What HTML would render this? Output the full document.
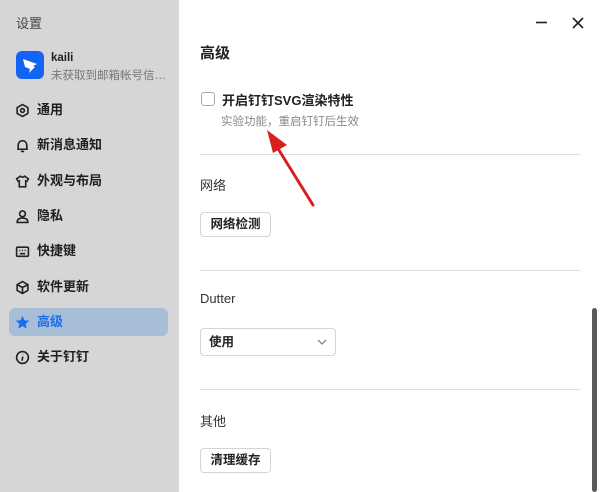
<!DOCTYPE html>
<html><head><meta charset="utf-8"><style>
*{margin:0;padding:0;box-sizing:border-box}
body{width:600px;height:492px;overflow:hidden;font-family:"Liberation Sans","Noto Sans CJK SC",sans-serif;background:#fff;position:relative;color:#222}
.side{position:absolute;left:0;top:0;width:179px;height:492px;background:#d6d6d6}
.abs{position:absolute;white-space:nowrap}
.nav{position:absolute;left:9px;width:159px;height:28px;font-size:13px;color:#1f1f1f;font-weight:bold;line-height:28px;padding-left:28px;border-radius:6px}
.nav svg{position:absolute;left:6px;top:6.5px}
.sel{background:#a7bed6;color:#1b6ef0}
.hr{position:absolute;left:200px;width:380px;height:1px;background:#dedede}
.btn{position:absolute;left:200px;width:71px;height:25px;border:1px solid #d4d4d4;border-radius:4px;font-size:12.5px;font-weight:bold;text-align:center;line-height:23px;background:#fff}
.lbl{position:absolute;left:200px;font-size:13px;color:#333}
</style></head><body>
<div class="side">
<div class="abs" style="left:16px;top:13px;font-size:13px;color:#444">设置</div>
<div class="abs" style="left:16px;top:51px;width:28px;height:28px;border-radius:6px;background:#1364f5">
<svg width="28" height="28" viewBox="0 0 28 28"><path d="M7 8 L21 13 L17 15 L19 16 L13 22 L14 18 L9 16 Z" fill="#fff"/></svg></div>
<div class="abs" style="left:51px;top:52px;font-size:11.5px;font-weight:bold;color:#222">kaili</div>
<div class="abs" style="left:51px;top:67px;width:116px;overflow:hidden;text-overflow:ellipsis;font-size:11.5px;color:#777">未获取到邮箱帐号信息息息</div>
<div class="nav" style="top:96px"><svg width="15" height="15" viewBox="0 0 14 14" fill="none" stroke="#222" stroke-width="1.5"><path d="M7 1.5 L12 4.3 V9.7 L7 12.5 L2 9.7 V4.3 Z"/><circle cx="7" cy="7" r="1.8"/></svg>通用</div>
<div class="nav" style="top:131px"><svg width="15" height="15" viewBox="0 0 14 14" fill="none" stroke="#222" stroke-width="1.5"><path d="M3 10.5 V6.5 A4 4 0 0 1 11 6.5 V10.5 Z M2 10.5 H12 M5.5 12.5 H8.5"/></svg>新消息通知</div>
<div class="nav" style="top:167px"><svg width="15" height="15" viewBox="0 0 14 14" fill="none" stroke="#222" stroke-width="1.5"><path d="M5 2 L1.5 4.5 L3 7 L4 6.5 V12 H10 V6.5 L11 7 L12.5 4.5 L9 2 Q7 4 5 2Z"/></svg>外观与布局</div>
<div class="nav" style="top:202px"><svg width="15" height="15" viewBox="0 0 14 14" fill="none" stroke="#222" stroke-width="1.5"><circle cx="7" cy="4.5" r="2.7"/><path d="M2 12.5 Q2 8.5 7 8.5 Q12 8.5 12 12.5 Z"/></svg>隐私</div>
<div class="nav" style="top:237px"><svg width="15" height="15" viewBox="0 0 14 14" fill="none" stroke="#222" stroke-width="1.5"><rect x="1.5" y="3" width="11" height="8.5" rx="1"/><path d="M4 6h1M6.5 6h1M9 6h1M4.5 9h5"/></svg>快捷键</div>
<div class="nav" style="top:273px"><svg width="15" height="15" viewBox="0 0 14 14" fill="none" stroke="#222" stroke-width="1.5"><path d="M7 1.5 L12 4.3 V9.7 L7 12.5 L2 9.7 V4.3 Z M2 4.3 L7 7 L12 4.3 M7 7 V12.5"/></svg>软件更新</div>
<div class="nav sel" style="top:308px"><svg width="15" height="15" viewBox="0 0 14 14"><path d="M7 0.8 L8.9 5 L13.4 5.3 L9.9 8.3 L11 12.8 L7 10.3 L3 12.8 L4.1 8.3 L0.6 5.3 L5.1 5 Z" fill="#1b6ef0"/></svg>高级</div>
<div class="nav" style="top:343px"><svg width="15" height="15" viewBox="0 0 14 14" fill="none" stroke="#222" stroke-width="1.5"><circle cx="7" cy="7" r="5.5"/><path d="M7.5 4.2v0.3M6.5 10 L7.3 6.2"/></svg>关于钉钉</div>
</div>
<svg class="abs" style="left:535px;top:16px" width="50" height="14" viewBox="0 0 50 14" stroke="#222" stroke-width="1.6"><path d="M1 6.5 H12"/><path d="M38 2 L48 12 M48 2 L38 12"/></svg>
<div class="abs" style="left:200px;top:42px;font-size:15px;font-weight:bold">高级</div>
<div class="abs" style="left:201px;top:92px;width:14px;height:14px;border:1.5px solid #aaa;border-radius:3px"></div>
<div class="abs" style="left:222px;top:90px;font-size:13px;font-weight:bold">开启钉钉SVG渲染特性</div>
<div class="abs" style="left:221px;top:113px;font-size:11.5px;color:#888">实验功能，重启钉钉后生效</div>
<div class="hr" style="top:154px"></div>
<div class="lbl" style="top:175px">网络</div>
<div class="btn" style="top:212px">网络检测</div>
<div class="hr" style="top:270px"></div>
<div class="lbl" style="top:291px">Dutter</div>
<div class="abs" style="left:200px;top:328px;width:136px;height:28px;border:1px solid #d4d4d4;border-radius:4px;font-size:12.5px;font-weight:bold;line-height:26px;padding-left:8px">使用
<svg style="position:absolute;right:8px;top:10px" width="10" height="6" viewBox="0 0 10 6" fill="none" stroke="#777" stroke-width="1.2"><path d="M1 1 L5 5 L9 1"/></svg></div>
<div class="hr" style="top:389px"></div>
<div class="lbl" style="top:411px">其他</div>
<div class="btn" style="top:448px">清理缓存</div>
<div class="abs" style="left:592px;top:308px;width:5px;height:184px;border-radius:3px;background:#5a5a5a"></div>
<svg class="abs" style="left:255px;top:125px" width="70" height="90" viewBox="0 0 70 90"><path d="M58 80 L22 22" stroke="#d9201f" stroke-width="3" stroke-linecap="round"/><path d="M12 5 L32 20 L18 28 Z" fill="#d9201f"/></svg>
</body></html>
